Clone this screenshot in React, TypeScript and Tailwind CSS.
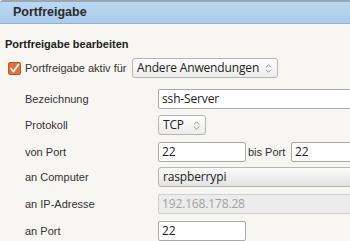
import { ChevronsUpDown } from 'lucide-react';

const labelFont = { fontFamily: '"Liberation Sans", Arial, sans-serif' };
const fieldText = "text-[12px] tracking-[-0.15px] text-[#222] whitespace-nowrap font-['Open_Sans',sans-serif]";

function Label({ children }: { children: React.ReactNode }) {
  return (
    <div className="w-[133px] shrink-0 text-[11px] text-[#333]" style={labelFont}>
      {children}
    </div>
  );
}

function Field({ value, className = '' }: { value: string; className?: string }) {
  return (
    <div className={`h-[20px] flex items-center pl-[3px] border border-[#a9a9a9] rounded-[2px] bg-white shrink-0 ${fieldText} ${className}`}>
      {value}
    </div>
  );
}

function Select({ value, className = '' }: { value: string; className?: string }) {
  return (
    <div
      className={`h-[20px] flex items-center justify-between pl-[4px] pr-[3px] border border-[#b5b5b5] rounded-[3px] bg-gradient-to-b from-white to-[#ececec] shrink-0 ${fieldText} ${className}`}
    >
      <span>{value}</span>
      <ChevronsUpDown className="w-[11px] h-[11px] text-[#888]" strokeWidth={2} />
    </div>
  );
}

export default function App() {
  return (
    <div className="w-[350px] h-[241px] overflow-hidden bg-[#f7f6f2]">
      {/* Header */}
      <div className="h-[24px] border-t-[2px] border-[#9aa7b3] border-b border-b-[#8fb0cf] bg-gradient-to-b from-[#bcd8f1] to-[#a8cbe9] rounded-tl-[3px] flex items-center pl-[13px]">
        <span className="text-[12.5px] font-bold text-[#2a2a2a]" style={labelFont}>Portfreigabe</span>
      </div>

      <div className="pl-[5px]">
        <div className="pt-[13px] h-[27px] text-[11px] font-bold text-[#222] leading-[14px]" style={labelFont}>
          Portfreigabe bearbeiten
        </div>

        {/* Enabled row */}
        <div className="mt-[7px] flex items-center h-[20px]">
          <svg width="13" height="13" viewBox="0 0 13 13" className="ml-[3px] mr-[4px]">
            <rect x="0.5" y="0.5" width="12" height="12" rx="1.5" fill="#e2713b" stroke="#b9582a" />
            <path d="M3 6.5 L5.5 9.5 L10.5 2.5" fill="none" stroke="#fff" strokeWidth="1.8" strokeLinecap="round" strokeLinejoin="round" />
          </svg>
          <span className="text-[11px] text-[#333] w-[107px]" style={labelFont}>Portfreigabe aktiv für</span>
          <Select value="Andere Anwendungen" className="w-[146px]" />
        </div>

        <div className="pl-[20px]">
          <div className="mt-[11px] flex items-center h-[20px]">
            <Label>Bezeichnung</Label>
            <Field value="ssh-Server" className="w-[220px]" />
          </div>
          <div className="mt-[6px] flex items-center h-[20px]">
            <Label>Protokoll</Label>
            <Select value="TCP" className="w-[48px]" />
          </div>
          <div className="mt-[7px] flex items-center h-[20px]">
            <Label>von Port</Label>
            <Field value="22" className="w-[88px]" />
            <span className="w-[45px] pl-[2px] text-[11px] text-[#333] shrink-0" style={labelFont}>bis Port</span>
            <Field value="22" className="w-[80px]" />
          </div>
          <div className="mt-[5px] flex items-center h-[20px]">
            <Label>an Computer</Label>
            <div className={`h-[20px] w-[220px] shrink-0 flex items-center pl-[4px] border border-[#b5b5b5] rounded-[3px] bg-gradient-to-b from-[#fbfbfb] to-[#e3e3e3] ${fieldText}`}>
              raspberrypi
            </div>
          </div>
          <div className="mt-[7px] flex items-center h-[20px]">
            <Label>an IP-Adresse</Label>
            <div className={`h-[20px] w-[220px] shrink-0 flex items-center pl-[3px] border border-[#cfcfcf] rounded-[2px] bg-[#ececec] ${fieldText} !text-[#a0a0a0]`}>
              192.168.178.28
            </div>
          </div>
          <div className="mt-[7px] flex items-center h-[20px]">
            <Label>an Port</Label>
            <Field value="22" className="w-[88px]" />
          </div>
        </div>
      </div>
    </div>
  );
}
